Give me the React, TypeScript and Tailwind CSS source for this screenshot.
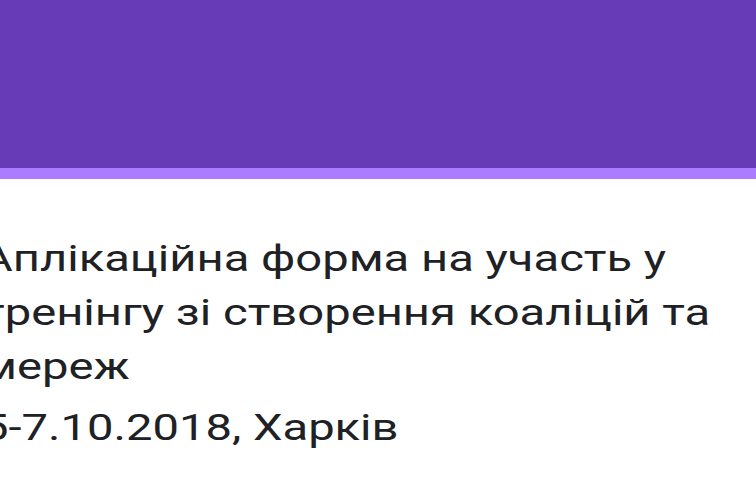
export default function App() {
  return (
    <div className="w-[756px] h-[500px] overflow-hidden bg-white" style={{ fontFamily: 'Roboto, "Noto Sans", sans-serif' }}>
      {/* Theme header */}
      <div className="h-[168px] bg-[#673ab7]" />
      <div className="h-[11px] bg-[#ad7bff]" />

      {/* Form title, drawn wide */}
      <div className="pt-[53px] ml-[-18px] origin-left scale-x-[1.31] text-[36px] leading-[54px] text-[#202124] whitespace-nowrap">
        <div>Аплікаційна форма на участь у</div>
        <div>тренінгу зі створення коаліцій та</div>
        <div>мереж</div>
        <div className="mt-[7px]">5-7.10.2018, Харків</div>
      </div>
    </div>
  )
}
